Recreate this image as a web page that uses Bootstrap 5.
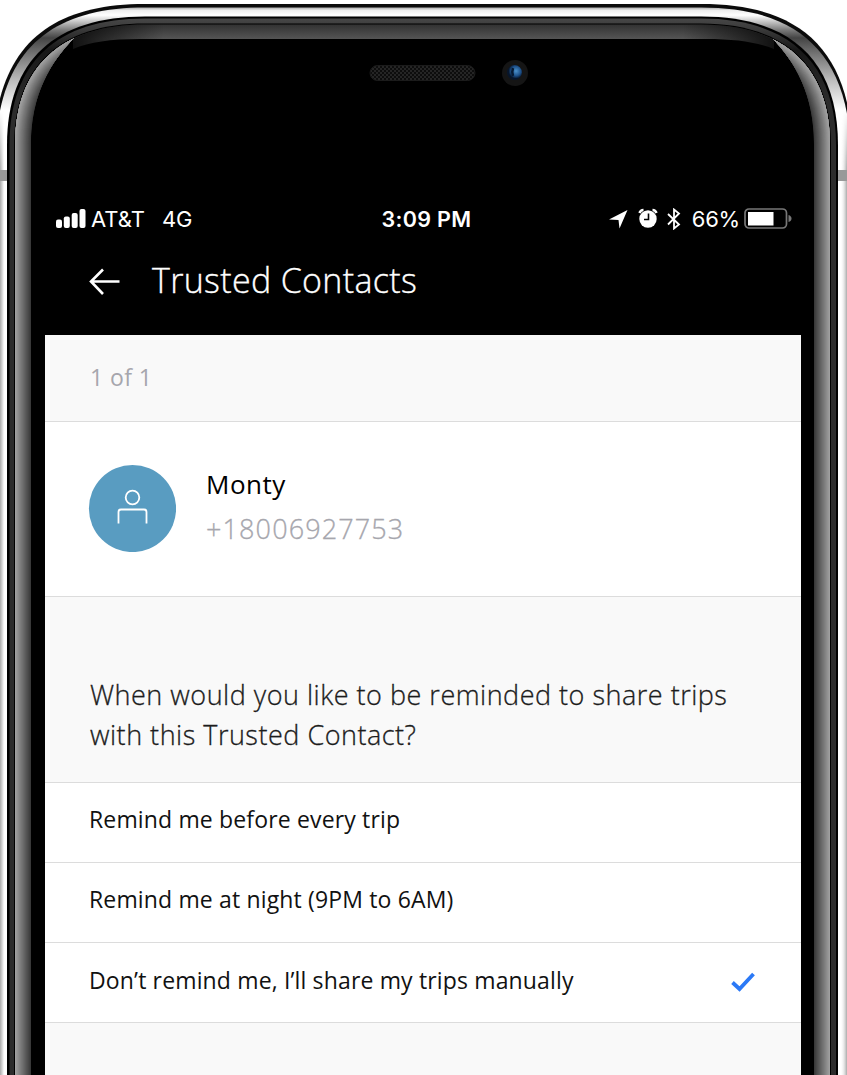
<!DOCTYPE html>
<html lang="en">
<head>
<meta charset="utf-8">
<meta name="viewport" content="width=device-width, initial-scale=1">
<title>Trusted Contacts</title>
<link href="https://cdn.jsdelivr.net/npm/bootstrap@5.3.0/dist/css/bootstrap.min.css" rel="stylesheet">
<style>
body{background:#fff;font-family:"Open Sans","Noto Sans",sans-serif;overflow:hidden}
.phone{width:847px;height:1075px;overflow:hidden}
.bezel{inset:0;width:847px;height:1075px}
.app{margin:0 46px 0 45px;height:1075px}
.sensors{height:196px}
.status{height:46px;font:400 22px/46px Inter,sans-serif;color:#fff;margin-right:9px;padding-left:10px}
.status>div{flex:1 1 0}
.status .clock{flex:0 0 auto;font-weight:600;font-size:21.5px;letter-spacing:.35px;padding-left:6px}
.titlebar{height:93px;padding-left:44px;color:#fff}
.titlebar h1{font-size:34px;font-weight:300;line-height:46px;margin:15px 0 0 31px;letter-spacing:.32px;-webkit-text-stroke:.35px currentColor}
.titlebar svg{margin-top:26px}
.panel{background:#f9f9f9}
.rule{border-bottom:1px solid #dcdcdc}
.count{height:87px;padding:25px 45px 0;font-size:23px;line-height:34px;letter-spacing:.4px;color:#a6a6ad}
.contact{height:175px;padding:42px 43px 0;background:#fff}
.contact .who{margin-left:30px}
.who .title{font-size:26px;line-height:40px;letter-spacing:.5px;color:#000}
.who .phone-no{font-size:27px;line-height:40px;margin-top:5px;font-weight:300;letter-spacing:1.12px;color:#a6a6ad;-webkit-text-stroke:.3px currentColor}
.question{height:186px;padding:78px 45px 0;font-size:27px;font-weight:300;line-height:40px;letter-spacing:.5px;color:#1c1c1c;white-space:nowrap;-webkit-text-stroke:.3px currentColor}
.choice{height:80px;padding:0 46px 6px 44px;background:#fff;font-size:23px;letter-spacing:.15px;color:#111;white-space:nowrap}
.choice:last-child{padding-bottom:5px}
</style>
</head>
<body>
<div class="phone position-relative">
<svg class="bezel position-absolute" viewBox="0 0 847 1075" aria-hidden="true">
<defs>
<linearGradient id="steel" gradientUnits="userSpaceOnUse" x1="0" y1="0" x2="0" y2="190">
<stop offset=".035" stop-color="#999"/><stop offset=".055" stop-color="#eee"/><stop offset=".08" stop-color="#fff"/><stop offset=".12" stop-color="#bbb"/><stop offset=".16" stop-color="#777"/><stop offset=".2" stop-color="#444"/><stop offset=".29" stop-color="#777"/><stop offset=".42" stop-color="#bbb"/><stop offset=".58" stop-color="#fff"/><stop offset="1" stop-color="#fff"/></linearGradient>
<linearGradient id="edge" gradientUnits="userSpaceOnUse" x1="0" y1="0" x2="847" y2="0">
<stop offset="0" stop-color="#aaa"/><stop offset=".003" stop-color="#ddd"/><stop offset=".006" stop-color="#fff" stop-opacity="0"/><stop offset=".992" stop-color="#fff" stop-opacity="0"/><stop offset="1" stop-color="#aaa"/></linearGradient>
<linearGradient id="edgeFade" gradientUnits="userSpaceOnUse" x1="0" y1="110" x2="0" y2="170"><stop offset="0" stop-color="#000"/><stop offset="1" stop-color="#fff"/></linearGradient>
<mask id="edgeMask" maskUnits="userSpaceOnUse" x="0" y="0" width="847" height="1075"><path fill="url(#edgeFade)" d="M0 0h847v1075H0z"/></mask>
<linearGradient id="topglass" gradientUnits="userSpaceOnUse" x1="0" y1="25" x2="0" y2="39"><stop offset="0" stop-color="#333"/><stop offset="1" stop-color="#555"/></linearGradient>
<linearGradient id="fade" gradientUnits="userSpaceOnUse" x1="73" y1="0" x2="774" y2="0"><stop offset="0" stop-color="#000" stop-opacity=".8"/><stop offset=".13" stop-color="#000" stop-opacity="0"/><stop offset=".87" stop-color="#000" stop-opacity="0"/><stop offset="1" stop-color="#000" stop-opacity=".8"/></linearGradient>
<linearGradient id="rim" gradientUnits="userSpaceOnUse" x1="0" y1="17" x2="0" y2="100"><stop offset="0" stop-color="#484848"/><stop offset=".15" stop-color="#3a3a3a"/><stop offset=".4" stop-color="#171717"/><stop offset="1" stop-color="#2c2c2c"/></linearGradient>
<clipPath id="side"><path d="M0 1080H31V145C31 95 50 62 75 37L60 20H0ZM847 1080H814V145C814 95 796 62 771 37L786 20H847Z"/></clipPath>
<clipPath id="glass"><path d="M15 1080V145C15 66 62 24.5 145 24.5H701C783 24.5 830 66 830 145V1080Z"/></clipPath>
<pattern id="mesh" width="4" height="4" patternUnits="userSpaceOnUse"><path fill="#0d0d0d" d="M0 0h4v4H0z"/><path fill="#252525" d="M0 0h2v2H0zM2 2h2v2H2z"/></pattern>
<radialGradient id="lens" cx=".6" cy=".4"><stop offset="0" stop-color="#4b91cb"/><stop offset=".65" stop-color="#1c4f88"/><stop offset="1" stop-color="#07152a"/></radialGradient>
</defs>
<path fill="#0b0b0b" d="M-7 1080V160C-7 50 45 4 145 4H701C801 4 853 50 853 160V1080Z"/>
<path fill="url(#steel)" d="M-4.500 1080V160C-4.500 53 48 7.500 145 7.500H701C798 7.500 851 53 851 160V1080Z"/>
<path fill="url(#edge)" mask="url(#edgeMask)" d="M0 110H7V1080H0ZM838 110H847V1080H838Z"/>
<path fill="#999" d="M0 170h8v11H0zM837 170h10v11H837z"/>
<path fill="#000" d="M7 1080V145C7 60 55 16.500 145 16.500H701C790 16.500 838 60 838 145V1080Z"/>
<path fill="url(#rim)" d="M9.500 1080V145C9.500 62 57 18.500 145 18.500H701C788 18.500 836 62 836 145V1080Z"/>
<path fill="#000" d="M14 1080V145C14 65 61 23.500 145 23.500H701C784 23.500 831 65 831 145V1080Z"/>
<g clip-path="url(#glass)"><path fill="url(#topglass)" d="M73 49C90 42 110 39 140 39H706C736 39 756 42 774 49V20H73Z"/><path fill="url(#fade)" d="M73 20H774V50H73Z"/>
<g clip-path="url(#side)"><g id="sheen" fill="none"></g></g></g>
<rect x="370" y="65.500" width="105" height="15" rx="7.500" fill="url(#mesh)" stroke="#1b1b1b"/>
<circle cx="515" cy="73" r="13" fill="#151515"/><circle cx="514.500" cy="72.500" r="7.500" fill="url(#lens)"/><path d="M513 68q-1.500 4 0 8" stroke="#071a33" stroke-width="2.500" fill="none"/>
</svg>
<main class="app position-relative d-flex flex-column">
<div class="sensors flex-shrink-0"></div>
<div class="status d-flex flex-shrink-0">
<div class="d-flex align-items-center">
<svg width="31" height="20" viewBox="0 0 31 20" fill="#fff"><rect x="1" y="10.500" width="6" height="8.500" rx="2"/><rect x="8.800" y="7.500" width="6" height="11.500" rx="2"/><rect x="16.700" y="4" width="6" height="15" rx="2"/><rect x="24.500" y="0" width="6" height="19" rx="2"/></svg>
<span style="margin-left:5px">AT&amp;T</span><span style="margin-left:17px">4G</span></div>
<div class="clock">3:09 PM</div>
<div class="d-flex align-items-center justify-content-end">
<svg width="19" height="19" viewBox="0 0 19 19"><path fill="#fff" d="M18.500 0L10.500 18.500 9.500 10 0 9.500Z"/></svg>
<svg style="margin-left:7px" width="24" height="24" viewBox="0 0 24 24" fill="none" stroke="#fff"><circle cx="13" cy="12" r="8.700" fill="#fff" stroke="none"/><path d="M4.500 6q1-3 4-3M21.500 6q-1-3-4-3" stroke-width="2.500"/><path d="M13.500 6.500v6H9" stroke="#000" stroke-width="1.600"/></svg>
<svg style="margin-left:8px" width="14" height="22" viewBox="0 0 14 22"><path fill="none" stroke="#fff" stroke-width="1.800" d="M1 6l11 10.500-5 4V1.500l5 4L1 16.500"/></svg>
<span style="margin-left:11px;letter-spacing:-.2px">66%</span>
<svg style="margin-left:4px" width="48" height="22" viewBox="0 0 48 22"><rect x="1" y="1" width="41.500" height="19" rx="4" fill="none" stroke="#777" stroke-width="1.700"/><rect x="4" y="4" width="25.500" height="13.500" fill="#fff"/><path fill="#777" d="M44.500 7q3 1 3 3.500t-3 3.500z"/></svg>
</div></div>
<header class="titlebar d-flex align-items-start flex-shrink-0">
<svg width="32" height="28" viewBox="0 0 32 28"><path d="M14 1.500L2 13.500l12 12.500M2 13.500h28.500" fill="none" stroke="#fff" stroke-width="2.600"/></svg>
<h1>Trusted Contacts</h1></header>
<div class="panel flex-grow-1">
<div class="count rule"><span>1 of 1</span></div>
<section class="contact rule d-flex">
<svg class="flex-shrink-0" width="88" height="88" viewBox="0 0 88 88"><circle cx="44.500" cy="44.500" r="43.600" fill="#599cc1"/><g fill="none" stroke="#fff" stroke-width="1.800"><circle cx="44.500" cy="33.500" r="6.800"/><path d="M30.500 59.500V48q0-2.500 2.500-2.500h23Q58.500 45.500 58.500 48v11.500"/></g></svg>
<div class="who"><div class="title"><span>Monty</span></div><div class="phone-no"><span>+18006927753</span></div></div>
</section>
<div class="question rule"><span>When would you like to be reminded to share trips</span><br><span>with this Trusted Contact?</span></div>
<div class="choice rule d-flex align-items-center"><span>Remind me before every trip</span></div>
<div class="choice rule d-flex align-items-center"><span>Remind me at night (9PM to 6AM)</span></div>
<div class="choice rule d-flex align-items-center justify-content-between"><span>Don’t remind me, I’ll share my trips manually</span>
<svg style="margin-top:4px" width="24" height="20" viewBox="0 0 24 20"><path d="M1.500 10.500L8.500 17 22.500 2" fill="none" stroke="#2b79f6" stroke-width="3.800"/></svg></div>
</div>
</main>
</div>
<script src="https://cdn.jsdelivr.net/npm/bootstrap@5.3.0/dist/js/bootstrap.bundle.min.js"></script>
<script>
// Glass sheen: concentric strokes darkening away from the rim.
const sheen=document.getElementById('sheen');
for(let i=17;i>0;i--){
  const p=document.createElementNS('http://www.w3.org/2000/svg','path');
  p.setAttribute('d','M15 1080V145C15 66 62 24.5 145 24.5H701C783 24.5 830 66 830 145V1080');
  const v=Math.round(166-i*6.8);
  p.setAttribute('stroke',`rgb(${v},${v},${v})`);
  p.setAttribute('stroke-width',i*2);
  sheen.append(p);
}
</script>
</body>
</html>
